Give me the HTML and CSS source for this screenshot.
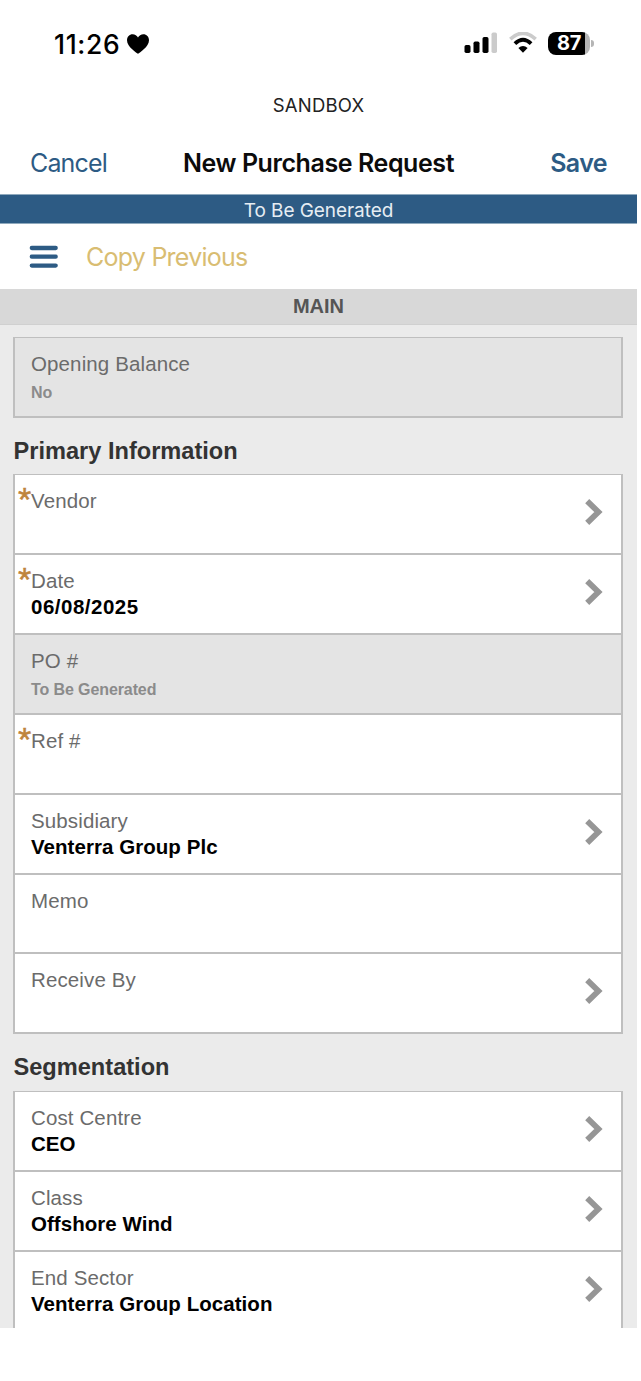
FILE: index.html
```html
<!DOCTYPE html>
<html lang="en">
<head>
<meta charset="utf-8">
<title>New Purchase Request</title>
<link rel="stylesheet" href="styles.css">
</head>
<body>
<svg width="0" height="0" class="defs"><symbol id="chev" viewBox="0 0 18 26"><path d="M2.200 2.200 13.400 13 2.200 23.800" fill="none" stroke="#969696" stroke-width="5.800"/></symbol></svg>
<div class="screen">
  <header class="status">
    <div class="clock"><span class="time">11:26</span>
      <svg class="heart" width="22" height="20" viewBox="0 0 22 20"><path d="M11 19.800C9.600 18.500 0 13 0 6.200 0 2.600 2.500.2 5.600.2 8 .2 10 1.500 11 3.600 12 1.500 14 .2 16.400.2 19.500.2 22 2.600 22 6.200 22 13 12.400 18.500 11 19.800Z"/></svg>
    </div>
    <div class="indicators">
      <svg width="34" height="22" viewBox="0 0 34 22"><rect x="0.500" y="13" width="6" height="8" rx="1.700"/><rect x="9.500" y="9.500" width="6" height="11.500" rx="1.700"/><rect x="18.500" y="5" width="6" height="16" rx="1.700"/><rect x="27.500" y="0.500" width="5.500" height="20.500" rx="1.700" fill="#cbcbcb"/></svg>
      <svg width="28" height="22" viewBox="0 0 28 22"><path d="M1.300 7.100Q14-4.600 26.700 7.100" fill="none" stroke="#cbcbcb" stroke-width="3.600"/><path d="M5.900 11.700Q14 3.800 22.100 11.700" fill="none" stroke="#000" stroke-width="3.800"/><path d="M9.400 16Q14 12 18.600 16L14 20.800Z"/></svg>
      <div class="battery"><span class="level">87</span><i class="cap"></i></div>
    </div>
  </header>
  <div class="env">SANDBOX</div>
  <nav class="nav"><a class="cancel">Cancel</a><h1 class="title">New Purchase Request</h1><a class="save">Save</a></nav>
  <div class="banner">To Be Generated</div>
  <div class="toolbar">
    <svg width="29" height="24" viewBox="0 0 29 24"><path d="M2.800 3H26.700M2.800 11.700H26.700M2.800 20.600H26.700" stroke="#2d5b84" stroke-width="4.300" stroke-linecap="round"/></svg>
    <a class="copy">Copy Previous</a>
  </div>
  <div class="tab">MAIN</div>
  <main class="form">
    <section class="card single">
      <div class="row locked"><div class="label">Opening Balance</div><div class="value">No</div></div>
    </section>
    <h2 class="heading">Primary Information</h2>
    <section class="card">
      <div class="row"><div class="label required">Vendor</div><svg class="chev"><use href="#chev"/></svg></div>
      <div class="row"><div class="label required">Date</div><div class="value date">06/08/2025</div><svg class="chev"><use href="#chev"/></svg></div>
      <div class="row locked"><div class="label">PO #</div><div class="value">To Be Generated</div></div>
      <div class="row"><div class="label required">Ref #</div></div>
      <div class="row"><div class="label">Subsidiary</div><div class="value">Venterra Group Plc</div><svg class="chev"><use href="#chev"/></svg></div>
      <div class="row"><div class="label">Memo</div></div>
      <div class="row"><div class="label">Receive By</div><svg class="chev"><use href="#chev"/></svg></div>
    </section>
    <h2 class="heading">Segmentation</h2>
    <section class="card">
      <div class="row"><div class="label">Cost Centre</div><div class="value">CEO</div><svg class="chev"><use href="#chev"/></svg></div>
      <div class="row"><div class="label">Class</div><div class="value">Offshore Wind</div><svg class="chev"><use href="#chev"/></svg></div>
      <div class="row"><div class="label">End Sector</div><div class="value">Venterra Group Location</div><svg class="chev"><use href="#chev"/></svg></div>
    </section>
  </main>
</div>
</body>
</html>
```
FILE: styles.css
```css
* { box-sizing: border-box; }
body { margin: 0; background: #fff; font-family: "Liberation Sans", Arial, sans-serif; }
.defs { display: block; height: 0; }
.screen { width: 637px; height: 1328px; overflow: hidden; white-space: nowrap; }
.status, .env, .nav, .banner, .toolbar { font-family: Inter, sans-serif; }

.status { display: flex; justify-content: space-between; height: 88px; padding: 28px 43px 0 54px; }
.clock { display: flex; height: 31px; align-items: center; gap: 7px; }
.time { font-size: 26.500px; font-weight: 500; line-height: 30px; letter-spacing: 0.650px; }
.indicators { display: flex; height: 30px; align-items: center; gap: 11px; }
.battery { display: flex; align-items: center; gap: 1px; }
.level { width: 42px; height: 23px; border-radius: 8px; background: linear-gradient(90deg, #000 37px, #b5b5b5 37px); color: #fff; font-size: 20px; font-weight: 700; line-height: 23px; padding-left: 9px; letter-spacing: -0.200px; }
.cap { width: 3px; height: 7px; border-radius: 0 4px 4px 0; background: #b5b5b5; }

.env { height: 34px; line-height: 34px; text-align: center; font-size: 18.500px; letter-spacing: 0.200px; color: #222; }
.nav { display: grid; grid-template-columns: 150px 1fr 150px; height: 72px; padding: 0 30px; line-height: 82px; font-size: 25px; color: #2d5b84; }
.cancel { letter-spacing: -0.850px; }
.title { margin: 0; font-size: 25px; font-weight: 600; letter-spacing: -0.420px; color: #0b0b0b; text-align: center; }
.save { font-weight: 600; letter-spacing: -0.600px; text-align: right; }
.banner { height: 30px; border: 1px solid #8fa9bd; border-width: 1px 0; background: #2d5b84; line-height: 31px; color: #e6edf3; font-size: 19px; letter-spacing: -0.070px; text-align: center; }
.toolbar { display: flex; align-items: center; gap: 28px; height: 65px; padding: 0 0 0 29px; }
.copy { color: #d9bd72; font-size: 25px; letter-spacing: -0.750px; }
.tab { height: 36px; line-height: 35px; background: #d8d8d8; border-bottom: 1px solid #d0d0d0; color: #555; font-size: 20px; font-weight: 700; text-align: center; }

.form { height: 1003px; padding: 11.500px 14px 0 13px; background: #ebebeb; }
.card { border: 2px solid #bfbfbf; border-top-width: 1px; border-bottom: 0; background: #fff; }
.row { position: relative; height: 79.850px; padding: 12px 0 0 16px; border-bottom: 2px solid #bfbfbf; }
.single .row { height: 80.500px; }
.locked { background: #e4e4e4; }
.label { position: relative; font-size: 20.500px; line-height: 27px; letter-spacing: 0.120px; color: #6b6b6b; }
.required::before { content: "*"; position: absolute; left: -13px; top: -1px; font-size: 34px; -webkit-text-stroke: 0.500px #bf853d; color: #bf853d; }
.value { font-size: 20.500px; line-height: 25px; letter-spacing: 0.050px; font-weight: 700; color: #000; }
.date { letter-spacing: 0.500px; }
.locked .value { font-size: 16px; letter-spacing: -0.100px; line-height: 32px; color: #8b8b8b; }
.chev { position: absolute; right: 18px; top: 24px; width: 18px; height: 26px; }
.heading { height: 57px; margin: 0; padding: 5px 0 0 0.500px; line-height: 57px; font-size: 23.600px; font-weight: 700; color: #333; }
.single + .heading { height: 56.400px; }
```
